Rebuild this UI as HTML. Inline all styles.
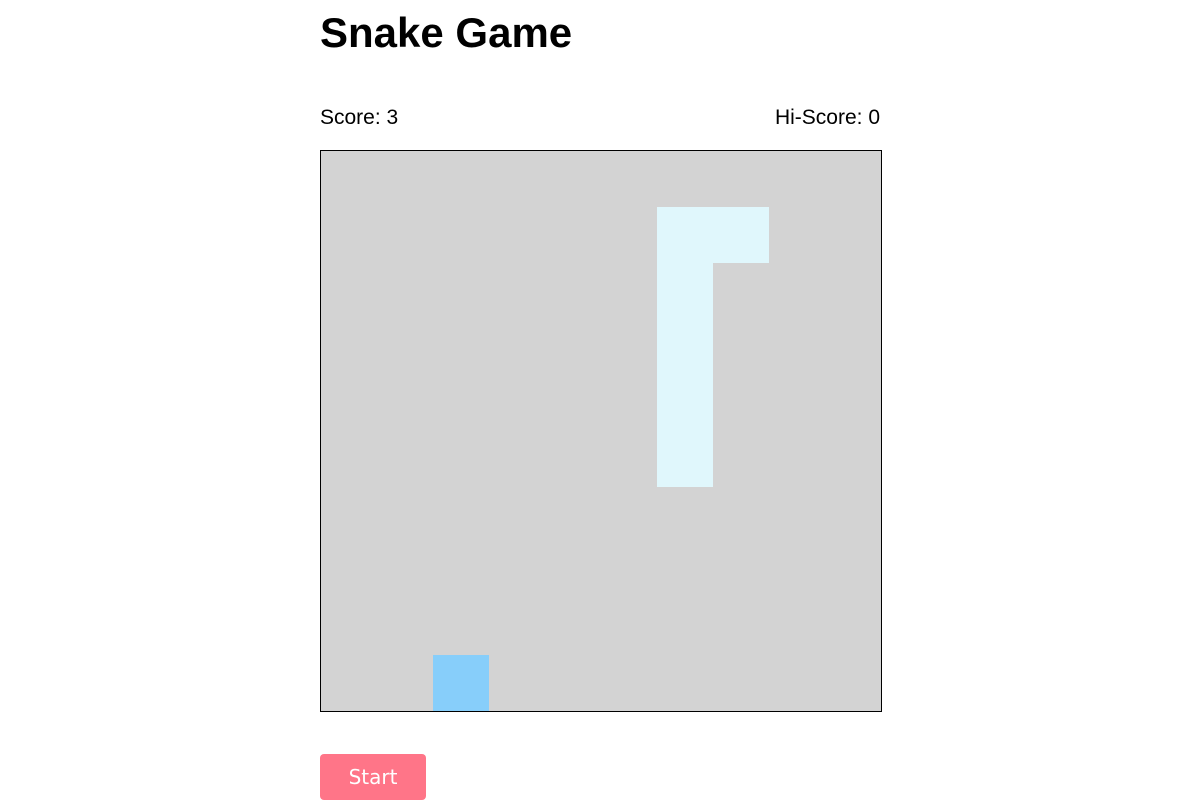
<!DOCTYPE html>
<html><head><style>
body{margin:0;background:#fff;font-family:"Liberation Sans",Arial,sans-serif;}
.wrap{position:absolute;left:320px;top:0;width:562px;}
h1{position:absolute;left:0;top:8px;margin:0;font-size:42px;font-weight:bold;line-height:50px;color:#000;white-space:nowrap}
.score{position:absolute;top:106px;left:0;font-size:21px;line-height:24px}
.hi{position:absolute;top:106px;right:2px;font-size:21px;line-height:24px;white-space:nowrap}
.board{position:absolute;top:150px;left:0;width:560px;height:560px;border:1px solid #000;background:#d3d3d3}
.c{position:absolute;width:56px;height:56px}
.s{background:#e0f7fc}
.f{background:#87cefa}
.btn{position:absolute;top:754px;left:0;width:106px;height:46px;background:#ff7588;border-radius:4px;color:#fff;font-family:"DejaVu Sans",sans-serif;font-size:20px;line-height:46px;text-align:center}
</style></head><body>
<div class="wrap">
<h1>Snake Game</h1>
<div class="score">Score: 3</div>
<div class="hi">Hi-Score: 0</div>
<div class="board">
<div class="c s" style="left:336px;top:56px;width:112px"></div>
<div class="c s" style="left:336px;top:112px;height:224px"></div>
<div class="c f" style="left:112px;top:504px"></div>
</div>
<div class="btn">Start</div>
</div>
</body></html>
